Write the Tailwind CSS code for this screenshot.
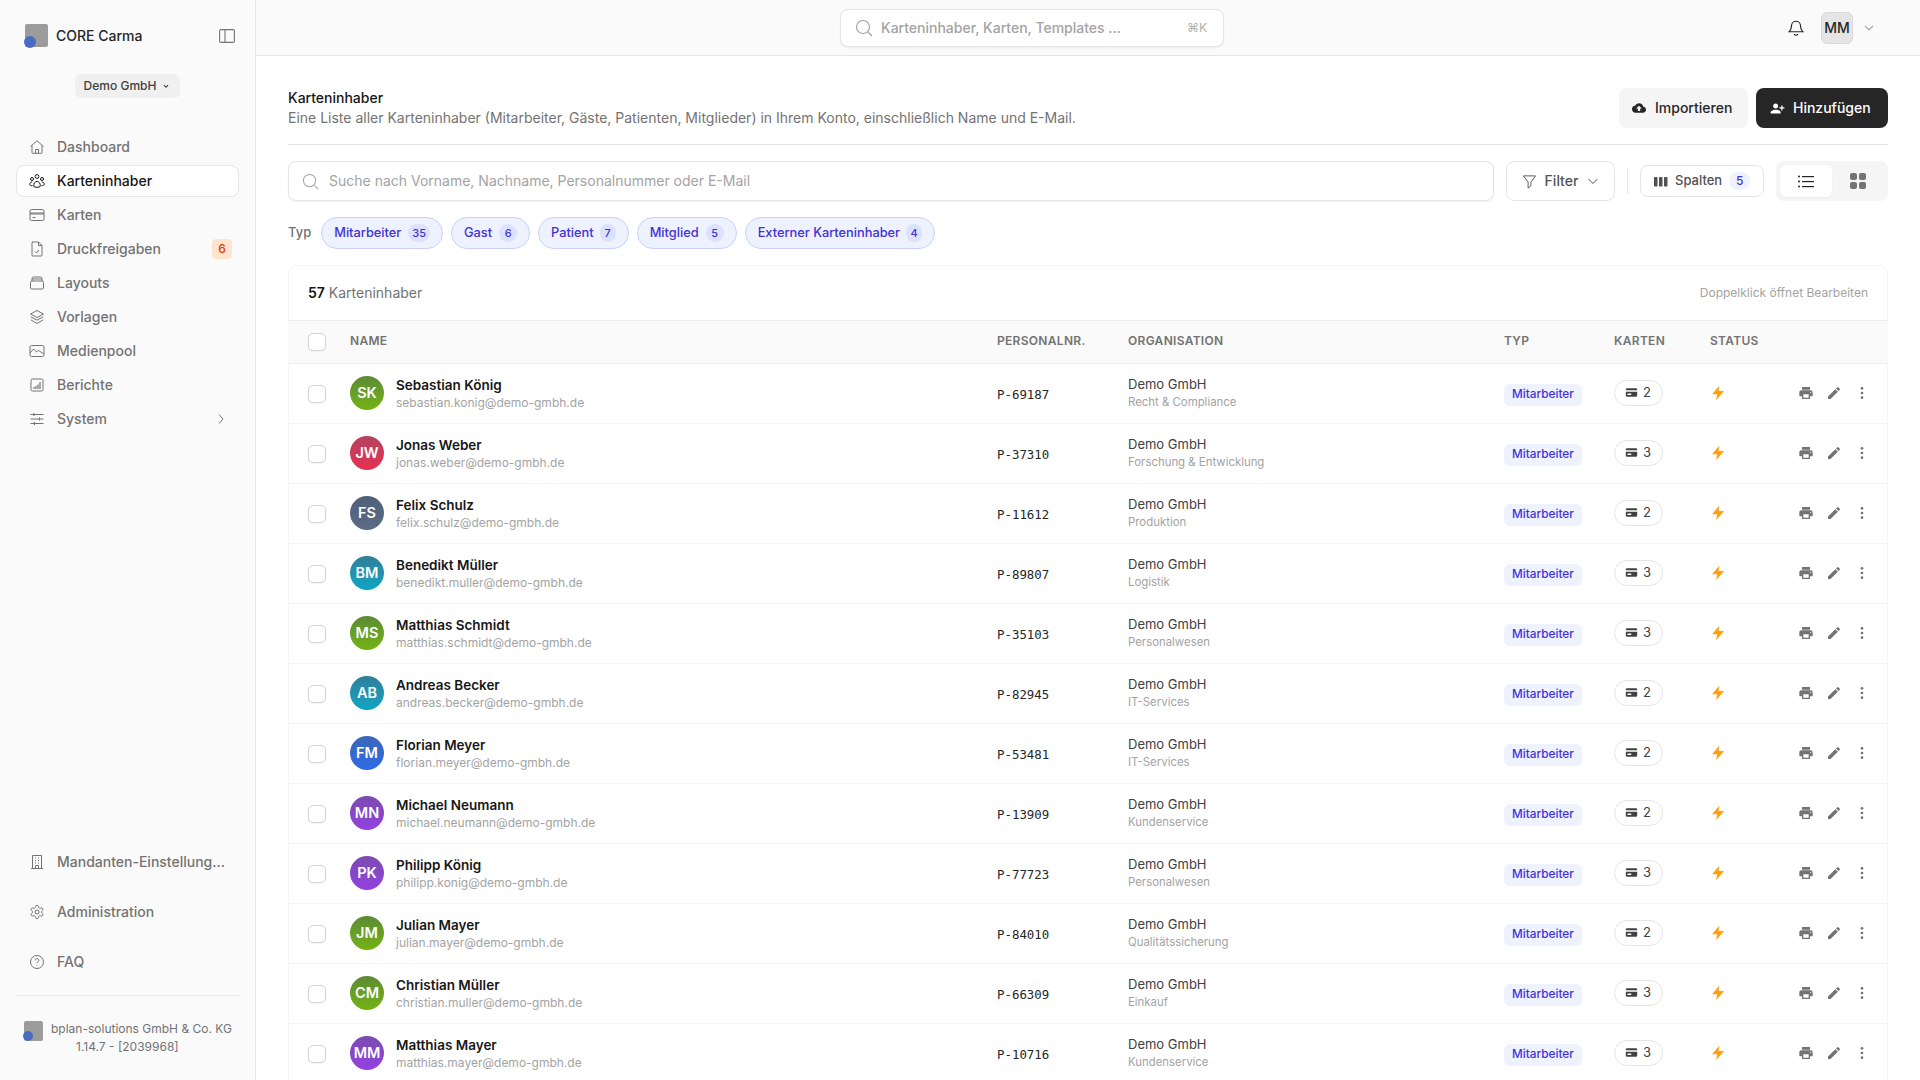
<!DOCTYPE html>
<html lang="de">
<head>
  <meta charset="UTF-8" />
  <meta name="viewport" content="width=device-width, initial-scale=1.0" />
  <title>CORE Carma - Karteninhaber</title>
  <script src="https://cdn.jsdelivr.net/npm/@tailwindcss/browser@4"></script>
</head>
<body class="h-screen overflow-hidden bg-white font-['Inter',sans-serif] text-[#171717]">

  <!-- Shared icons -->
  <svg class="hidden">
    <symbol id="i-print" viewBox="0 0 24 24"><path fill="currentColor" d="M19 8H5c-1.66 0-3 1.34-3 3v6h4v4h12v-4h4v-6c0-1.66-1.34-3-3-3zm-3 11H8v-5h8v5zm3-7c-.55 0-1-.45-1-1s.45-1 1-1 1 .45 1 1-.45 1-1 1zm-1-9H6v4h12V3z"/></symbol>
    <symbol id="i-pen" viewBox="0 0 24 24"><path fill="currentColor" d="M3 17.25V21h3.75L17.81 9.94l-3.75-3.75L3 17.25zM20.71 7.04a1 1 0 0 0 0-1.41l-2.34-2.34a1 1 0 0 0-1.41 0l-1.83 1.83 3.75 3.75 1.83-1.83z"/></symbol>
    <symbol id="i-dots" viewBox="0 0 24 24"><circle cx="12" cy="5" r="2" fill="currentColor"/><circle cx="12" cy="12" r="2" fill="currentColor"/><circle cx="12" cy="19" r="2" fill="currentColor"/></symbol>
    <symbol id="i-bolt" viewBox="0 0 24 24"><path fill="currentColor" d="M14 1 3 14h8l-2 9 12-14h-8l1-8z"/></symbol>
    <symbol id="i-card" viewBox="0 0 24 24"><path fill="currentColor" fill-rule="evenodd" d="M4 4h16a2.500 2.500 0 0 1 2.500 2.500V8h-21V6.500A2.500 2.500 0 0 1 4 4zM1.500 10.500h21v7A2.500 2.500 0 0 1 20 20H4a2.500 2.500 0 0 1-2.500-2.500v-7zM4.500 14v2.500h7V14h-7z"/></symbol>
  </svg>

  <div class="flex h-screen">

    <!-- Sidebar -->
    <aside class="w-[256px] shrink-0 bg-[#fafafa] border-r border-[#e5e5e5] flex flex-col px-4 text-[#737373]">
      <div class="flex items-center h-[72px] pl-2 pr-1 pt-0">
        <div class="relative w-[24px] h-[24px] mr-2">
          <div class="absolute left-[1px] top-0 w-[23px] h-[23px] rounded-[2px] bg-[#9c9c9c]"></div>
          <div class="absolute left-0 bottom-0 w-[12px] h-[12px] rounded-full bg-[#4a6cc0]"></div>
        </div>
        <span class="text-sm font-medium text-[#262626]">CORE Carma</span>
        <svg class="ml-auto w-[16px] h-[14px] text-[#737373]" viewBox="0 0 16 14" fill="none" stroke="currentColor" stroke-width="1.100"><rect x=".6" y=".6" width="14.800" height="12.800" rx="1.500"/><path d="M6 .6v12.800"/></svg>
      </div>
      <div class="flex justify-center mt-[2px]">
        <div class="flex items-center h-[24px] px-[9px] rounded-md bg-[#f0f0f0] text-xs font-medium text-[#404040]">
          Demo GmbH
          <svg class="w-[10px] h-[10px] ml-[5px]" viewBox="0 0 12 12" fill="none" stroke="currentColor" stroke-width="1.300"><path d="m3.500 5 2.500 2.500L8.500 5"/></svg>
        </div>
      </div>

      <nav class="mt-[33px] flex flex-col gap-[2px] text-sm font-medium">
        <a class="flex items-center h-[32px] px-[13px] gap-[12px]">
          <svg class="w-[16px] h-[16px] shrink-0" viewBox="0 0 16 16" fill="none" stroke="currentColor" stroke-width="1"><path d="M1.500 7.500 8 1.800l6.500 5.700M3 6.500v7a.8.8 0 0 0 .8.8h8.400a.8.8 0 0 0 .8-.8v-7M6.500 14.300v-3.800h3v3.800"/></svg>
          Dashboard
        </a>
        <a class="flex items-center h-[32px] px-[12px] gap-[12px] bg-white border border-[#e5e5e5] rounded-lg text-[#171717]">
          <svg class="w-[16px] h-[16px] shrink-0" viewBox="0 0 16 16" fill="none" stroke="currentColor" stroke-width="1"><circle cx="8" cy="3.500" r="1.900"/><circle cx="3" cy="6" r="1.500"/><circle cx="13" cy="6" r="1.500"/><path d="M4.800 13.500c-.4-3 1-5 3.200-5s3.600 2 3.200 5c-.2 1-6.200 1-6.400 0zM3.200 9c-1.600 0-2.500 1-2.500 2.400 0 1 1.200 1.300 2.800 1.200M12.800 9c1.600 0 2.500 1 2.500 2.400 0 1-1.200 1.300-2.800 1.200"/></svg>
          Karteninhaber
        </a>
        <a class="flex items-center h-[32px] px-[13px] gap-[12px]">
          <svg class="w-[16px] h-[16px] shrink-0" viewBox="0 0 16 16" fill="none" stroke="currentColor" stroke-width="1"><rect x="1" y="2.500" width="14" height="11" rx="1.500"/><path d="M1 6h14M1 7h14M3.500 10.500h3"/></svg>
          Karten
        </a>
        <a class="flex items-center h-[32px] pl-[13px] pr-[7px] gap-[12px]">
          <svg class="w-[16px] h-[16px] shrink-0" viewBox="0 0 16 16" fill="none" stroke="currentColor" stroke-width="1"><path d="M3.500 1h6L13 4.500v9.700a.8.800 0 0 1-.8.800H3.800a.8.800 0 0 1-.8-.8V1.800A.8.800 0 0 1 3.800 1zM9.500 1v3.500H13M6 10.500l1.500 1.500 2.500-3"/></svg>
          Druckfreigaben
          <span class="ml-auto w-[20px] h-[20px] rounded bg-[#ffe4cf] text-[#e03c00] text-xs font-medium flex items-center justify-center">6</span>
        </a>
        <a class="flex items-center h-[32px] px-[13px] gap-[12px]">
          <svg class="w-[16px] h-[16px] shrink-0" viewBox="0 0 16 16" fill="none" stroke="currentColor" stroke-width="1"><path d="M3 6V3.500A1.500 1.500 0 0 1 4.500 2h7A1.500 1.500 0 0 1 13 3.500V6M1.500 7.500A1.500 1.500 0 0 1 3 6h10a1.500 1.500 0 0 1 1.500 1.500V13a1 1 0 0 1-1 1h-11a1 1 0 0 1-1-1zM3 4h10"/></svg>
          Layouts
        </a>
        <a class="flex items-center h-[32px] px-[13px] gap-[12px]">
          <svg class="w-[16px] h-[16px] shrink-0" viewBox="0 0 16 16" fill="none" stroke="currentColor" stroke-width="1"><path d="M8 1.500 14.500 5 8 8.500 1.500 5zM1.800 7.800 8 11.200l6.200-3.400M1.800 10.800 8 14.500l6.200-3.700"/></svg>
          Vorlagen
        </a>
        <a class="flex items-center h-[32px] px-[13px] gap-[12px]">
          <svg class="w-[16px] h-[16px] shrink-0" viewBox="0 0 16 16" fill="none" stroke="currentColor" stroke-width="1"><rect x="1" y="2.500" width="14" height="11" rx="1.500"/><path d="m1 10 3.500-4 3 3 2-1.500L15 11"/></svg>
          Medienpool
        </a>
        <a class="flex items-center h-[32px] px-[13px] gap-[12px]">
          <svg class="w-[16px] h-[16px] shrink-0" viewBox="0 0 16 16" fill="none" stroke="currentColor" stroke-width="1"><rect x="2" y="2" width="12" height="12" rx="1.500"/><path d="M5 12v-2M7 12V9M9 12V7.500M11 12V5" stroke-width="1.200"/></svg>
          Berichte
        </a>
        <a class="flex items-center h-[32px] pl-[13px] pr-[12px] gap-[12px]">
          <svg class="w-[16px] h-[16px] shrink-0" viewBox="0 0 16 16" fill="none" stroke="currentColor" stroke-width="1.100"><path d="M1.500 3.500h13M1.500 8h13M1.500 12.500h13"/><path d="M5 2v3M10.500 6.500v3M5.500 11v3"/></svg>
          System
          <svg class="ml-auto w-[12px] h-[12px]" viewBox="0 0 12 12" fill="none" stroke="currentColor" stroke-width="1"><path d="m4 1.500 4 4.500-4 4.500"/></svg>
        </a>
      </nav>

      <div class="mt-auto flex flex-col text-sm font-medium gap-[18px]">
        <a class="flex items-center h-[32px] px-[13px] gap-[12px] whitespace-nowrap">
          <svg class="w-[16px] h-[16px] shrink-0" viewBox="0 0 16 16" fill="none" stroke="currentColor" stroke-width="1"><path d="M3.500 14.500v-13h9v13M2 14.500h12M6 4h1M9 4h1M6 6.500h1M9 6.500h1M6 9h1M9 9h1M6.500 14.500v-3h3v3"/></svg>
          Mandanten-Einstellung...
        </a>
        <a class="flex items-center h-[32px] px-[13px] gap-[12px]">
          <svg class="w-[16px] h-[16px] shrink-0" viewBox="0 0 24 24" fill="none" stroke="currentColor" stroke-width="1.500"><path d="M12.200 2h-.4a2 2 0 0 0-2 2v.2a2 2 0 0 1-1 1.700l-.4.300a2 2 0 0 1-2 0l-.2-.1a2 2 0 0 0-2.700.7l-.2.400a2 2 0 0 0 .7 2.700l.2.100a2 2 0 0 1 1 1.700v.5a2 2 0 0 1-1 1.800l-.2.100a2 2 0 0 0-.7 2.700l.2.400a2 2 0 0 0 2.700.7l.2-.1a2 2 0 0 1 2 0l.4.300a2 2 0 0 1 1 1.700v.2a2 2 0 0 0 2 2h.4a2 2 0 0 0 2-2v-.2a2 2 0 0 1 1-1.700l.4-.3a2 2 0 0 1 2 0l.2.100a2 2 0 0 0 2.700-.7l.2-.4a2 2 0 0 0-.7-2.700l-.2-.1a2 2 0 0 1-1-1.800v-.5a2 2 0 0 1 1-1.700l.2-.1a2 2 0 0 0 .7-2.700l-.2-.4a2 2 0 0 0-2.700-.7l-.2.100a2 2 0 0 1-2 0l-.4-.3a2 2 0 0 1-1-1.700V4a2 2 0 0 0-2-2z"/><circle cx="12" cy="12" r="3"/></svg>
          Administration
        </a>
        <a class="flex items-center h-[32px] px-[13px] gap-[12px]">
          <svg class="w-[16px] h-[16px] shrink-0" viewBox="0 0 16 16" fill="none" stroke="currentColor" stroke-width="1"><circle cx="8" cy="8" r="6.500"/><path d="M6.200 6.300a1.800 1.800 0 1 1 2.700 1.600c-.6.400-.9.700-.9 1.300M8 11v.6"/></svg>
          FAQ
        </a>
      </div>

      <div class="mt-[17px] border-t border-[#e9e9e9] h-[85px] pt-[25px] pl-[7px] flex gap-[8px] text-xs leading-[18px]">
        <div class="relative w-[20px] h-[20px] shrink-0">
          <div class="absolute left-[1px] top-0 w-[19px] h-[20px] rounded-[2px] bg-[#9c9c9c]"></div>
          <div class="absolute left-0 bottom-0 w-[10px] h-[10px] rounded-full bg-[#4a6cc0]"></div>
        </div>
        <div class="whitespace-nowrap -mt-[1px]">
          <div>bplan-solutions GmbH &amp; Co. KG</div>
          <div class="pl-[25px]">1.14.7 - [2039968]</div>
        </div>
      </div>
    </aside>

    <!-- Main -->
    <div class="flex-1 min-w-0 flex flex-col">

      <!-- Top bar -->
      <header class="h-[56px] shrink-0 bg-[#fafafa] border-b border-[#e5e5e5] relative flex items-center justify-end pr-[45px]">
        <div class="absolute left-[584px] top-[9px] w-[384px] h-[38px] bg-white border border-[#e5e5e5] rounded-lg shadow-xs flex items-center pl-[14px] pr-[16px]">
          <svg class="w-[18px] h-[18px] text-[#a3a3a3]" viewBox="0 0 18 18" fill="none" stroke="currentColor" stroke-width="1.200"><circle cx="8" cy="8" r="6.500"/><path d="m13 13 4 4"/></svg>
          <span class="ml-[8px] text-sm font-medium text-[#a3a3a3]">Karteninhaber, Karten, Templates ...</span>
          <span class="ml-auto text-xs text-[#b0b0b0]">⌘K</span>
        </div>
        <svg class="w-[18px] h-[18px] text-[#262626]" viewBox="0 0 24 24" fill="none" stroke="currentColor" stroke-width="1.600"><path d="M6 9a6 6 0 1 1 12 0c0 5 1.500 6.500 3 8H3c1.500-1.500 3-3 3-8zM9.500 20a2.700 2.700 0 0 0 5 0"/></svg>
        <div class="ml-[16px] w-[32px] h-[32px] bg-[#e5e5e5] border border-[#d9d9d9] rounded-md flex items-center justify-center text-sm font-medium text-[#262626]">MM</div>
        <svg class="ml-[10px] w-[12px] h-[12px] text-[#a3a3a3]" viewBox="0 0 12 12" fill="none" stroke="currentColor" stroke-width="1.100"><path d="m2 4 4 4 4-4"/></svg>
      </header>

      <!-- Content -->
      <main class="flex-1 min-h-0 overflow-hidden px-[32px]">

        <div class="flex items-center justify-between pt-[32px] pb-[16px] border-b border-[#e5e5e5]">
          <div>
            <h1 class="text-sm font-medium text-[#171717] leading-[20px]">Karteninhaber</h1>
            <p class="text-sm text-[#737373] leading-[20px]">Eine Liste aller Karteninhaber (Mitarbeiter, Gäste, Patienten, Mitglieder) in Ihrem Konto, einschließlich Name und E-Mail.</p>
          </div>
          <div class="flex gap-[8px]">
            <button class="h-[40px] w-[129px] pl-[13px] rounded-lg bg-[#f5f5f5] text-sm font-medium text-[#262626] flex items-center gap-[9px]">
              <svg class="w-[14px] h-[14px]" viewBox="0 0 24 24"><path fill="currentColor" d="M19.350 10.040A7.490 7.490 0 0 0 12 4C9.110 4 6.600 5.640 5.350 8.040A5.994 5.994 0 0 0 0 14c0 3.310 2.690 6 6 6h13c2.760 0 5-2.240 5-5 0-2.640-2.050-4.780-4.650-4.960zM14 13v4h-4v-4H7l5-5 5 5h-3z"/></svg>
              Importieren
            </button>
            <button class="h-[40px] w-[132px] pl-[14px] rounded-lg bg-[#262626] text-sm font-medium text-white flex items-center gap-[8px]">
              <svg class="w-[15px] h-[15px] -scale-x-100" viewBox="0 0 24 24"><path fill="currentColor" d="M15 12c2.210 0 4-1.790 4-4s-1.790-4-4-4-4 1.790-4 4 1.790 4 4 4zm-9-2V7H4v3H1v2h3v3h2v-3h3v-2H6zm9 4c-2.670 0-8 1.340-8 4v2h16v-2c0-2.660-5.330-4-8-4z"/></svg>
              Hinzufügen
            </button>
          </div>
        </div>

        <!-- Search and view controls -->
        <div class="flex items-center mt-[16px] h-[40px]">
          <div class="w-[1206px] h-[40px] bg-white border border-[#e5e5e5] rounded-lg shadow-xs flex items-center pl-[13px]">
            <svg class="w-[17px] h-[17px] text-[#a3a3a3]" viewBox="0 0 18 18" fill="none" stroke="currentColor" stroke-width="1.100"><circle cx="8" cy="8" r="6.500"/><path d="m13 13 4 4"/></svg>
            <span class="ml-[10px] text-sm text-[#a3a3a3]">Suche nach Vorname, Nachname, Personalnummer oder E-Mail</span>
          </div>
          <button class="ml-[12px] w-[109px] h-[40px] bg-white border border-[#e5e5e5] rounded-lg flex items-center justify-center text-sm font-medium text-[#525252]">
            <svg class="w-[15px] h-[15px] mr-[8px]" viewBox="0 0 16 16" fill="none" stroke="currentColor" stroke-width="1"><path d="M1.500 2h13L9.500 8.500v4l-3 2.500V8.500z"/></svg>
            Filter
            <svg class="w-[12px] h-[12px] ml-[9px]" viewBox="0 0 12 12" fill="none" stroke="currentColor" stroke-width="1"><path d="m1.500 4 4.500 4.500L10.500 4"/></svg>
          </button>
          <div class="ml-[12px] w-px h-[26px] bg-[#e5e5e5]"></div>
          <button class="ml-[12px] w-[124px] h-[32px] bg-white border border-[#e5e5e5] rounded-lg flex items-center pl-[13px] text-[13px] font-medium text-[#525252]">
            <svg class="w-[14px] h-[11px] mr-[7px]" viewBox="0 0 14 11"><rect x="0" y="1" width="3.500" height="9.500" rx=".8" fill="currentColor"/><rect x="5" y="1" width="3.500" height="9.500" rx=".8" fill="currentColor"/><rect x="10" y="1" width="3.500" height="9.500" rx=".8" fill="currentColor"/></svg>
            Spalten
            <span class="ml-[7px] w-[21px] h-[18px] rounded-full bg-[#eef2ff] text-[#4330d8] text-xs font-medium flex items-center justify-center">5</span>
          </button>
          <div class="ml-[12px] w-[112px] h-[40px] rounded-lg bg-[#f5f5f5] flex items-center p-[4px]">
            <div class="w-[52px] h-[32px] rounded-md bg-white shadow-xs flex items-center justify-center text-[#262626]">
              <svg class="w-[16px] h-[13px]" viewBox="0 0 16 13" fill="currentColor"><circle cx="1" cy="1.500" r="1"/><circle cx="1" cy="6.500" r="1"/><circle cx="1" cy="11.500" r="1"/><rect x="4" y="1" width="12" height="1.200"/><rect x="4" y="6" width="12" height="1.200"/><rect x="4" y="11" width="12" height="1.200"/></svg>
            </div>
            <div class="flex-1 flex items-center justify-center text-[#737373]">
              <svg class="w-[16px] h-[16px]" viewBox="0 0 16 16" fill="currentColor"><rect width="7" height="7" rx="2"/><rect x="9" width="7" height="7" rx="2"/><rect y="9" width="7" height="7" rx="2"/><rect x="9" y="9" width="7" height="7" rx="2"/></svg>
            </div>
          </div>
        </div>

        <!-- Type filter chips -->
        <div class="flex items-center gap-[8px] mt-[16px] h-[32px]">
          <span class="text-[13px] font-medium text-[#737373] mr-[2px]">Typ</span>
          <span class="h-[32px] px-[12px] rounded-full bg-[#eef2ff] border border-[#c7d2fe] text-[12.800px] font-medium text-[#4330d8] flex items-center gap-[7px]">Mitarbeiter <span class="min-w-[21px] h-[18px] px-[4px] rounded-full bg-[#dbe2ff] text-[11px] flex items-center justify-center">35</span></span>
          <span class="h-[32px] px-[12px] rounded-full bg-[#eef2ff] border border-[#c7d2fe] text-[12.800px] font-medium text-[#4330d8] flex items-center gap-[7px]">Gast <span class="min-w-[18px] h-[18px] px-[4px] rounded-full bg-[#dbe2ff] text-[11px] flex items-center justify-center">6</span></span>
          <span class="h-[32px] px-[12px] rounded-full bg-[#eef2ff] border border-[#c7d2fe] text-[12.800px] font-medium text-[#4330d8] flex items-center gap-[6px]">Patient <span class="min-w-[16px] h-[18px] px-[3px] rounded-full bg-[#dbe2ff] text-[11px] flex items-center justify-center">7</span></span>
          <span class="h-[32px] px-[12px] rounded-full bg-[#eef2ff] border border-[#c7d2fe] text-[12.800px] font-medium text-[#4330d8] flex items-center gap-[7px]">Mitglied <span class="min-w-[18px] h-[18px] px-[4px] rounded-full bg-[#dbe2ff] text-[11px] flex items-center justify-center">5</span></span>
          <span class="h-[32px] px-[12px] rounded-full bg-[#eef2ff] border border-[#c7d2fe] text-[12.800px] font-medium text-[#4330d8] flex items-center gap-[6px]">Externer Karteninhaber <span class="min-w-[16px] h-[18px] px-[3px] rounded-full bg-[#dbe2ff] text-[11px] flex items-center justify-center">4</span></span>
        </div>

        <!-- Table -->
        <div class="mt-[16px] border border-b-0 border-[#f5f5f5] rounded-t-lg">
          <div class="h-[54px] flex items-center justify-between pl-[19px] pr-[19px]">
            <div class="text-sm text-[#737373]"><span class="font-semibold text-[#171717]">57</span> Karteninhaber</div>
            <div class="text-xs text-[#a3a3a3]">Doppelklick öffnet Bearbeiten</div>
          </div>
          <div class="h-[44px] -mx-px grid grid-cols-[62px_647px_131px_376px_110px_96px_1fr] items-center bg-[#fafafa] border-y border-[#ededed] text-xs font-semibold text-[#737373] uppercase tracking-[0.025em]">
            <div class="pl-[20px]"><div class="w-[18px] h-[18px] rounded-[5px] border border-[#d4d4d4] bg-white shadow-xs"></div></div>
            <div class="-mt-[2px]">Name</div>
            <div class="-mt-[2px]">Personalnr.</div>
            <div class="-mt-[2px]">Organisation</div>
            <div class="-mt-[2px]">Typ</div>
            <div class="-mt-[2px]">Karten</div>
            <div class="-mt-[2px]">Status</div>
          </div>
          <div id="rows" class="-mx-px"></div>
        </div>
      </main>
    </div>
  </div>

  <script>
    const green = "bg-linear-to-b from-[#5d8a33] to-[#73b30c]";
    const red = "bg-linear-to-b from-[#b5405f] to-[#e72f52]";
    const slate = "bg-linear-to-b from-[#4e6078] to-[#5c6b86]";
    const teal = "bg-linear-to-b from-[#2d7f99] to-[#08a5c4]";
    const blue = "bg-linear-to-b from-[#3b66b8] to-[#2f6be8]";
    const purple = "bg-linear-to-b from-[#7a4bb0] to-[#9340e0]";

    const people = [
      ["SK", "Sebastian König", "sebastian.konig", "P-69187", "Recht & Compliance", 2, green],
      ["JW", "Jonas Weber", "jonas.weber", "P-37310", "Forschung & Entwicklung", 3, red],
      ["FS", "Felix Schulz", "felix.schulz", "P-11612", "Produktion", 2, slate],
      ["BM", "Benedikt Müller", "benedikt.muller", "P-89807", "Logistik", 3, teal],
      ["MS", "Matthias Schmidt", "matthias.schmidt", "P-35103", "Personalwesen", 3, green],
      ["AB", "Andreas Becker", "andreas.becker", "P-82945", "IT-Services", 2, teal],
      ["FM", "Florian Meyer", "florian.meyer", "P-53481", "IT-Services", 2, blue],
      ["MN", "Michael Neumann", "michael.neumann", "P-13909", "Kundenservice", 2, purple],
      ["PK", "Philipp König", "philipp.konig", "P-77723", "Personalwesen", 3, purple],
      ["JM", "Julian Mayer", "julian.mayer", "P-84010", "Qualitätssicherung", 2, green],
      ["CM", "Christian Müller", "christian.muller", "P-66309", "Einkauf", 3, green],
      ["MM", "Matthias Mayer", "matthias.mayer", "P-10716", "Kundenservice", 3, purple]
    ];

    document.getElementById("rows").innerHTML = people.map(p => `
      <div class="h-[60px] grid grid-cols-[62px_647px_131px_376px_110px_96px_1fr] items-center border-b border-[#f5f5f5]">
        <div class="pl-[20px]"><div class="w-[18px] h-[18px] rounded-[5px] border border-[#d4d4d4] bg-white shadow-xs"></div></div>
        <div class="flex items-center gap-[12px] -mt-[2px]">
          <div class="w-[34px] h-[34px] rounded-full ${p[6]} text-white text-[14.500px] font-semibold flex items-center justify-center">${p[0]}</div>
          <div class="mt-[2px]">
            <div class="text-[13.500px] font-semibold text-[#171717] leading-[18px] pt-[1px]">${p[1]}</div>
            <div class="text-xs text-[#a3a3a3] leading-[18px]">${p[2]}@demo-gmbh.de</div>
          </div>
        </div>
        <div class="font-['DejaVu_Sans_Mono',monospace] text-[12.400px] text-[#262626] mt-[4px]">${p[3]}</div>
        <div class="-mt-[2px]">
          <div class="text-[13px] text-[#404040] leading-[18px]">Demo GmbH</div>
          <div class="text-[11.400px] text-[#a3a3a3] leading-[18px]">${p[4]}</div>
        </div>
        <div class="flex mt-[2px]"><span class="inline-flex items-center h-[22px] px-[8px] rounded-md bg-[#eef2ff] text-[11.800px] font-medium text-[#4330d8]">Mitarbeiter</span></div>
        <div class="-mt-[2px]"><span class="inline-flex items-center w-[49px] h-[26px] pl-[10px] rounded-full border border-[#e5e5e5] text-[13px] text-[#404040]"><svg class="w-[13px] h-[13px] mr-[5px] text-[#404040]"><use href="#i-card"/></svg>${p[5]}</span></div>
        <div class="flex items-center -mt-[2px]">
          <svg class="w-[16px] h-[16px] text-[#ff9f0a]"><use href="#i-bolt"/></svg>
          <div class="ml-auto mr-[18px] flex items-center gap-[12px] text-[#737373]">
            <svg class="w-[16px] h-[16px]"><use href="#i-print"/></svg>
            <svg class="w-[16px] h-[16px]"><use href="#i-pen"/></svg>
            <svg class="w-[16px] h-[16px]"><use href="#i-dots"/></svg>
          </div>
        </div>
      </div>`).join("");
  </script>
</body>
</html>
